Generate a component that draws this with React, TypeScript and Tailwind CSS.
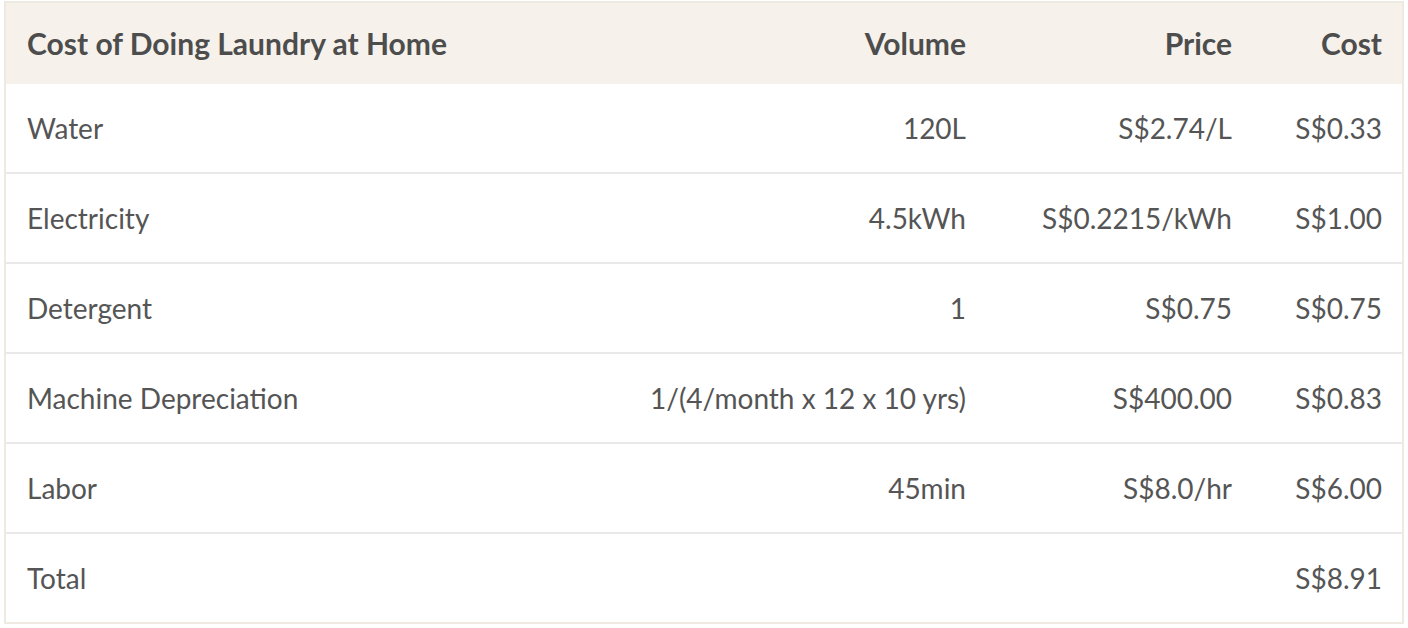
const rows = [
  { item: "Water", volume: "120L", price: "S$2.74/L", cost: "S$0.33" },
  { item: "Electricity", volume: "4.5kWh", price: "S$0.2215/kWh", cost: "S$1.00" },
  { item: "Detergent", volume: "1", price: "S$0.75", cost: "S$0.75" },
  { item: "Machine Depreciation", volume: "1/(4/month x 12 x 10 yrs)", price: "S$400.00", cost: "S$0.83" },
  { item: "Labor", volume: "45min", price: "S$8.0/hr", cost: "S$6.00" },
  { item: "Total", volume: "", price: "", cost: "S$8.91" },
];

const cols = "grid grid-cols-[1fr_349px_266px_150px] items-center";

export default function App() {
  return (
    <div className="bg-white px-[4px] pt-[1px] font-['Lato',sans-serif] text-[28px]">
      <div className="border-2 border-[#eeeae2]">
        <div className={`${cols} h-[81px] bg-[#f6f2eb] text-[30px] font-bold text-[#4d4d4d]`}>
          <div className="pl-[21px]">Cost of Doing Laundry at Home</div>
          <div className="pr-[20px] text-right">Volume</div>
          <div className="pr-[20px] text-right">Price</div>
          <div className="pr-[20px] text-right">Cost</div>
        </div>
        {rows.map((r, i) => (
          <div
            key={r.item}
            className={`${cols} h-[88px] box-content text-[#555555] ${i > 0 ? "border-t-2 border-[#e9e9e9]" : ""}`}
          >
            <div className="pl-[21px]">{r.item}</div>
            <div className="pr-[20px] text-right">{r.volume}</div>
            <div className="pr-[20px] text-right">{r.price}</div>
            <div className="pr-[20px] text-right">{r.cost}</div>
          </div>
        ))}
      </div>
    </div>
  );
}
